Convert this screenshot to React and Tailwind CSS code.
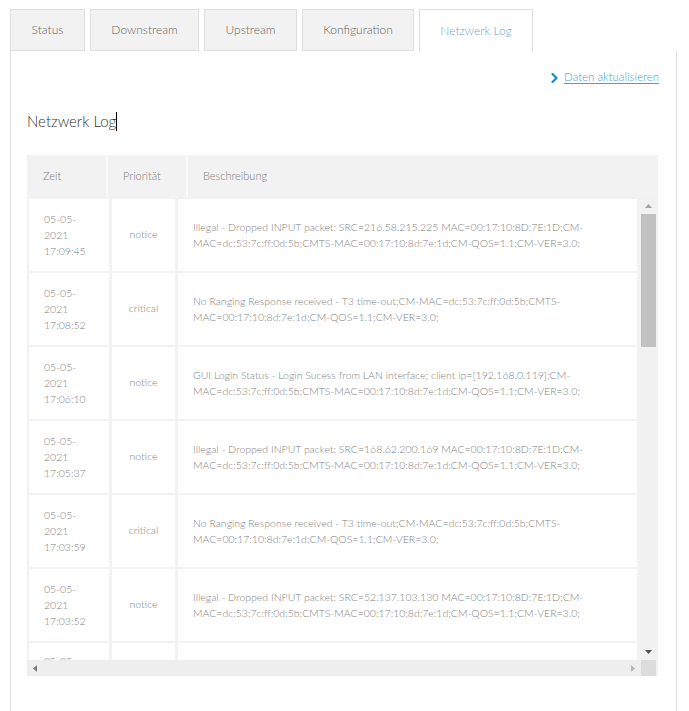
import React from 'react';

const tabs = [
    { label: 'Status', w: 'w-[75px]' },
    { label: 'Downstream', w: 'w-[109px]' },
    { label: 'Upstream', w: 'w-[93px]' },
    { label: 'Konfiguration', w: 'w-[112px]' },
];

const L2a = 'MAC=dc:53:7c:ff:0d:5b;CMTS-MAC=00:17:10:8d:7e:1d;CM-QOS=1.1;CM-VER=3.0;';
const L2b = 'MAC=00:17:10:8d:7e:1d;CM-QOS=1.1;CM-VER=3.0;';

const rows = [
    { time: '17:09:45', prio: 'notice', lines: ['Illegal - Dropped INPUT packet: SRC=216.58.215.225 MAC=00:17:10:8D:7E:1D;CM-', L2a] },
    { time: '17:08:52', prio: 'critical', lines: ['No Ranging Response received - T3 time-out;CM-MAC=dc:53:7c:ff:0d:5b;CMTS-', L2b] },
    { time: '17:06:10', prio: 'notice', lines: ['GUI Login Status - Login Sucess from LAN interface; client ip=[192.168.0.119];CM-', L2a] },
    { time: '17:05:37', prio: 'notice', lines: ['Illegal - Dropped INPUT packet: SRC=168.62.200.169 MAC=00:17:10:8D:7E:1D;CM-', L2a] },
    { time: '17:03:59', prio: 'critical', lines: ['No Ranging Response received - T3 time-out;CM-MAC=dc:53:7c:ff:0d:5b;CMTS-', L2b] },
    { time: '17:03:52', prio: 'notice', lines: ['Illegal - Dropped INPUT packet: SRC=52.137.103.130 MAC=00:17:10:8D:7E:1D;CM-', L2a] },
];

function LogRow({ row }) {
    return (
        <div className="flex gap-[3px] shrink-0">
            <div className="w-[80px] h-[72px] bg-white pl-[15px] flex flex-col justify-center leading-[16px]">
                <span>05-05-</span>
                <span>2021</span>
                <span>{row.time}</span>
            </div>
            <div className="w-[63px] h-[72px] bg-white flex items-center justify-center">
                {row.prio}
            </div>
            <div className="w-[459px] h-[72px] bg-white pl-[15px] flex flex-col justify-center leading-[16px] whitespace-nowrap">
                {row.lines.map((l, i) => (
                    <span key={i}>{l}</span>
                ))}
            </div>
        </div>
    );
}

export default function App() {
    return (
        <div className="w-[689px] h-[711px] bg-white overflow-hidden" style={{ fontFamily: 'Lato, "Open Sans", sans-serif' }}>
            {/* Tabs */}
            <div className="flex gap-[5px] pl-[10px] pt-[9px] items-start">
                {tabs.map(t => (
                    <div key={t.label} className={`${t.w} h-[42px] bg-[#f2f2f2] border border-[#dedede] flex items-center justify-center text-[12px] font-light text-[#666]`}>
                        {t.label}
                    </div>
                ))}
                <div className="w-[114px] h-[43px] bg-white border border-b-0 border-[#dedede] flex items-center justify-center text-[12px] font-light text-[#6d9fc9] -mb-px">
                    Netzwerk Log
                </div>
            </div>

            {/* Panel */}
            <div className="ml-[10px] w-[667px] h-[660px] border-l border-r border-[#dedede] pl-[16px] pr-[17px]">
                <div className="flex justify-end items-center gap-[6px] pt-[17px] h-[35px]">
                    <svg width="7" height="10" viewBox="0 0 7 10" className="mt-px">
                        <path d="M1.5 1 L5.5 5 L1.5 9" fill="none" stroke="#0a91bd" strokeWidth="2.2" strokeLinecap="round" strokeLinejoin="round" />
                    </svg>
                    <a href="#" className="text-[11.5px] font-light text-[#4f9ccf] underline underline-offset-2">Daten aktualisieren</a>
                </div>

                <div className="mt-[24px] h-[22px] flex items-center text-[15px] font-light text-[#333]">
                    <span>Netzwerk Log</span>
                    <span className="inline-block w-px h-[19px] bg-black" />
                </div>

                {/* Table */}
                <div className="mt-[23px] w-[631px] bg-[#f2f2f2] font-light text-[#808080]">
                    <div className="flex h-[42px] items-center text-[11px]">
                        <div className="w-[81px] h-full pl-[16px] flex items-center border-r-2 border-[#fafafa]">Zeit</div>
                        <div className="w-[80px] h-full pl-[15px] flex items-center border-r-2 border-[#fafafa]">Priorität</div>
                        <div className="pl-[15px] flex items-center">Beschreibung</div>
                    </div>
                    <div className="flex h-[463px] text-[10.5px]">
                        <div className="w-[614px] h-full overflow-hidden pl-[2px] pt-[2px] flex flex-col gap-[2px]">
                            {rows.map((r, i) => (
                                <LogRow key={i} row={r} />
                            ))}
                            <div className="flex gap-[3px] shrink-0">
                                <div className="w-[80px] h-[72px] bg-white pl-[15px] pt-[10px] leading-[16px]">05-05-</div>
                                <div className="w-[63px] h-[72px] bg-white" />
                                <div className="w-[459px] h-[72px] bg-white" />
                            </div>
                        </div>
                        {/* vertical scrollbar */}
                        <div className="w-[15px] h-full bg-[#f1f1f1] flex flex-col">
                            <div className="h-[17px] flex items-center justify-center">
                                <svg width="7" height="4" viewBox="0 0 7 4"><path d="M0 4 L3.5 0 L7 4 Z" fill="#a3a3a3" /></svg>
                            </div>
                            <div className="h-[133px] bg-[#c1c1c1]" />
                            <div className="flex-1" />
                            <div className="h-[17px] flex items-center justify-center">
                                <svg width="7" height="4" viewBox="0 0 7 4"><path d="M0 0 L3.5 4 L7 0 Z" fill="#505050" /></svg>
                            </div>
                        </div>
                    </div>
                    {/* horizontal scrollbar */}
                    <div className="flex h-[16px]">
                        <div className="w-[614px] h-full bg-[#eeeeee] flex items-center justify-between px-[6px]">
                            <svg width="4" height="7" viewBox="0 0 4 7"><path d="M4 0 L0 3.5 L4 7 Z" fill="#7a7a7a" /></svg>
                            <svg width="4" height="7" viewBox="0 0 4 7"><path d="M0 0 L4 3.5 L0 7 Z" fill="#b5b5b5" /></svg>
                        </div>
                        <div className="w-[15px] h-full bg-[#dcdcdc]" />
                    </div>
                </div>
            </div>
        </div>
    );
}
